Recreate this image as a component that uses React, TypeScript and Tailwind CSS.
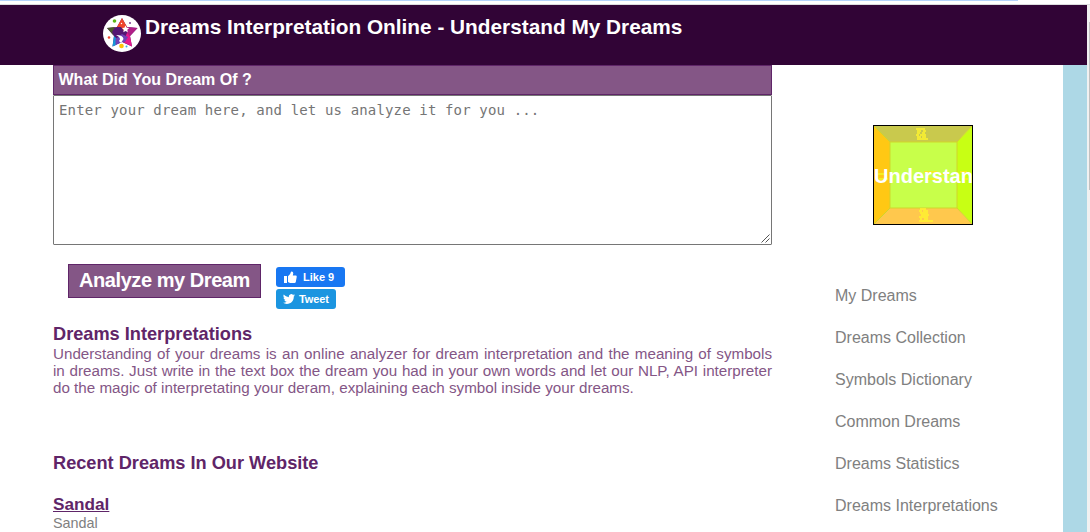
const menuItems = [
  "My Dreams",
  "Dreams Collection",
  "Symbols Dictionary",
  "Common Dreams",
  "Dreams Statistics",
  "Dreams Interpretations",
];

function StarLogo() {
  return (
    <svg className="mt-[10px] h-[37px] w-[38px] shrink-0" viewBox="0 0 38 37">
      <ellipse cx="19" cy="18.5" rx="19" ry="18.5" fill="#fff" />
      <path d="M19 3 24 12 34.500 13 27 21 29 31.500 19 27 9.500 31.500 11 21 4 13 14 12Z" fill="#541672" />
      <path d="M19 3 24 12 21 16 18 12 14 12Z" fill="#f0452c" />
      <path d="M24 12 34.500 13 27 21 24 19Z" fill="#b01f86" />
      <path d="M24 18 27 21 29 31.500 20 27Z" fill="#e5198d" />
      <path d="M4 13 12 12 9 17 11 21Z" fill="#4b5a2b" />
      <path d="M11 21 14 24 13 30 9.500 31.500Z" fill="#1598d8" />
      <path d="M12.500 24 19 19 25 22 22 27 19 27 12.500 30Z" fill="#7040b5" />
      <path d="M13 20Q20 20 20.500 24L18 28 16 26Q19 23 13 20Z" fill="#fff" />
      <path d="m22.500 10.500 1.200 2.200 2.500.3-1.900 1.700.5 2.500-2.300-1.200-2.200 1.200.5-2.500L19 13l2.400-.3Z" fill="#fff" />
      <circle cx="18.500" cy="8.500" r=".7" fill="#fff" />
      <circle cx="11.500" cy="6" r="1.800" fill="#5cb816" />
      <circle cx="6" cy="22.500" r="1.300" fill="#f0452c" />
      <circle cx="18.500" cy="31" r="2.300" fill="#ffc107" />
      <circle cx="27" cy="8" r="1" fill="#7b3a91" />
      <circle cx="23.500" cy="31.500" r="1" fill="#35aee2" />
    </svg>
  );
}

function Cube() {
  return (
    <div className="relative mx-auto h-[100px] w-[100px] overflow-hidden border border-black">
      <svg className="block" width="98" height="98" viewBox="0 0 98 98">
        <path d="M0 0H98L83 16H16Z" fill="#c9c94d" />
        <path d="M98 0V98L83 82V16Z" fill="#c8ff14" />
        <path d="M0 98H98L83 82H16Z" fill="#ffc84d" />
        <path d="M0 0V98L16 82V16Z" fill="#ffc814" />
        <path d="M16 16H83V82H16Z" fill="#c8ff4a" />
        <path
          d="M0 0 16 16H83L98 0M0 98 16 82H83L98 98M16 16V82M83 16V82"
          fill="none"
          stroke="#d0d52a"
        />
        <path
          d="M42 3H51M43 5H47M49 5H52M43 7H46M48 7H51M42 9H45M46 9H52M43 11H47M48 11H52M43 13H54M46 83H52M45 85H48M49 85H54M46 87H54M47 89H55M45 91H54M46 93H48M50 93H54M45 95H59"
          stroke="#fff52e"
          strokeWidth="1.300"
        />
        <path
          d="M4 48H13M5 53H14M50 46H63M66 48H75M52 53H72M86 46H93M88 53H94"
          stroke="#f4ee20"
          strokeWidth="2"
        />
      </svg>
      <div className="absolute top-[39px] left-0 text-[20px] leading-[23px] font-bold whitespace-nowrap text-white">
        Understan
      </div>
    </div>
  );
}

function SocialButtons() {
  return (
    <div className="mt-[3px] ml-[15px] text-[11px] font-bold text-white">
      <div className="flex h-5 w-[69px] items-center rounded-[3px] bg-[#1877f2] pl-2">
        <svg width="13" height="12" viewBox="0 0 13 12" fill="#fff">
          <path d="M0 5H3V12H0Z" />
          <path d="M4 5.200Q6.500 3.500 7 .7Q9 0 9.300 2.200L8.800 4.500H12Q13 4.700 12.700 6L11.800 11Q11.500 12 10.500 12H6L4 11Z" />
        </svg>
        <span className="ml-[6px]">Like 9</span>
      </div>
      <div className="mt-[2px] flex h-5 w-[60px] items-center rounded-[3px] bg-[#1b95e0] pl-[7px]">
        <svg width="12" height="12" viewBox="0 0 24 24" fill="#fff">
          <path d="M23.950 4.570a10 10 0 0 1-2.820.77 4.960 4.960 0 0 0 2.160-2.720c-.95.56-2 .97-3.130 1.190a4.920 4.920 0 0 0-8.380 4.480C7.690 8.090 4.070 6.130 1.640 3.160a4.930 4.930 0 0 0 1.520 6.570 4.900 4.900 0 0 1-2.230-.61v.06a4.920 4.920 0 0 0 3.950 4.830 5 5 0 0 1-2.210.08 4.940 4.940 0 0 0 4.600 3.420A9.870 9.870 0 0 1 0 19.540a14 14 0 0 0 7.550 2.210c9.050 0 14-7.500 14-13.980l-.02-.64a9.940 9.940 0 0 0 2.420-2.560Z" />
        </svg>
        <span className="ml-[4px] tracking-[-0.100px]">Tweet</span>
      </div>
    </div>
  );
}

function DreamForm() {
  return (
    <>
      <div className="h-[30px] border border-[#5f2568] bg-[#845686] pl-[4.500px] text-[16px] leading-[27px] font-bold text-white">
        What Did You Dream Of ?
      </div>
      <div className="relative h-[150px] rounded-[1px] border border-[#767676] bg-white">
        <textarea
          className="block h-full w-full resize-none px-[5px] py-[5px] font-['DejaVu_Sans_Mono',monospace] text-[14px] leading-[18px] tracking-[0.150px] outline-none placeholder:text-[#757575]"
          placeholder="Enter your dream here, and let us analyze it for you ..."
        />
        <svg className="absolute right-[1px] bottom-[1px]" width="9" height="9" viewBox="0 0 9 9">
          <path d="M.5 8.500 8.500 .5M4.500 8.500 8.500 4.500" stroke="#555" />
        </svg>
      </div>
      <div className="mt-[19px] flex items-start pl-[15px]">
        <button className="h-[34px] w-[193px] border border-[#5f2568] bg-[#845686] pb-[2px] text-[20px] leading-[30px] font-bold tracking-[-0.440px] whitespace-nowrap text-white">
          Analyze my Dream
        </button>
        <SocialButtons />
      </div>
    </>
  );
}

export default function App() {
  return (
    <div className="flex h-[532px] w-[1090px] flex-col overflow-hidden bg-white font-['Liberation_Sans',Arial,sans-serif]">
      <div className="h-[5px] shrink-0 border-b border-[#dcdcdf]">
        <div className="h-px w-[1018px] bg-[#b5d3fb]" />
      </div>
      <div className="flex min-h-0 flex-1">
        <div className="flex w-[1087px] flex-col">
          <header className="flex h-[60px] shrink-0 bg-[#310436] pl-[103px] text-white">
            <StarLogo />
            <h1 className="mt-[10px] ml-1 text-[20.800px] leading-6 font-bold whitespace-nowrap">
              Dreams Interpretation Online - Understand My Dreams
            </h1>
          </header>
          <div className="flex min-h-0 flex-1">
            <main className="ml-[53px] w-[719px] shrink-0 text-[#5f2568]">
              <DreamForm />
              <h2 className="mt-[15px] text-[18.200px] leading-[20px] font-bold">Dreams Interpretations</h2>
              <p className="mt-[1px] text-justify text-[15.200px] leading-[17px] text-[#845686]">
                Understanding of your dreams is an online analyzer for dream interpretation and the meaning of symbols
                in dreams. Just write in the text box the dream you had in your own words and let our NLP, API interpreter
                do the magic of interpretating your deram, explaining each symbol inside your dreams.
              </p>
              <h2 className="mt-[57px] text-[18.200px] leading-[20px] font-bold">Recent Dreams In Our Website</h2>
              <a className="mt-[21px] block text-[17.200px] leading-5 font-bold underline">Sandal</a>
              <p className="mt-px text-[14.400px] leading-[17px] text-[#808080]">Sandal</p>
            </main>
            <aside className="flex-1 pt-[60px]">
              <div className="pl-[11px]">
                <Cube />
              </div>
              <nav className="mt-[61px] flex flex-col gap-[22px] pl-[63px] text-[16px] leading-5 text-[#808080]">
                {menuItems.map((item) => (
                  <a key={item}>{item}</a>
                ))}
              </nav>
            </aside>
            <div className="w-6 bg-[#add8e6]" />
          </div>
        </div>
        <div className="flex-1 bg-[#f1f1f1] pt-[17px] pl-[2px]">
          <div className="h-[168px] bg-[#c1c1c1]" />
        </div>
      </div>
    </div>
  );
}
